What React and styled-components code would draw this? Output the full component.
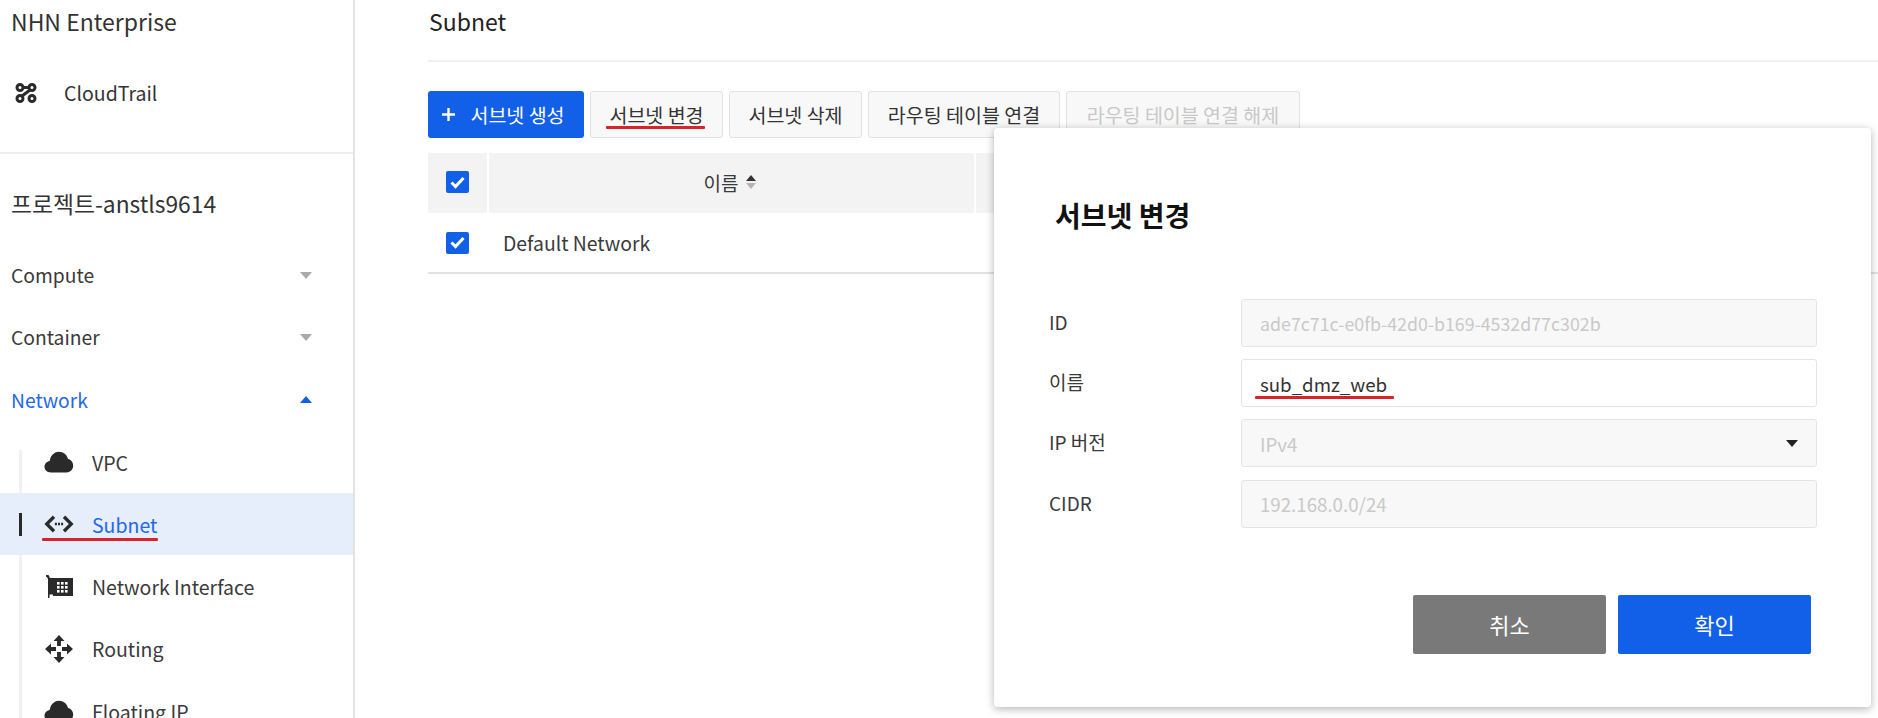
import React from "react";
import styled, { createGlobalStyle } from "styled-components";

const GlobalStyle = createGlobalStyle`
  html, body {
    margin: 0;
    padding: 0;
    background: #fff;
  }
  * { box-sizing: border-box; }
  body {
    font-family: "Noto Sans CJK KR", "Noto Sans", sans-serif;
    color: #333;
  }
`;

const Page = styled.div`
  position: relative;
  display: flex;
  width: 1878px;
  height: 718px;
  overflow: hidden;
`;

/* sidebar */
const Sidebar = styled.aside`
  width: 355px;
  height: 718px;
  flex-shrink: 0;
  border-right: 2px solid #e4e4e4;
  overflow: hidden;
`;

const Org = styled.div`
  height: 44px;
  padding-left: 11px;
  font-size: 23px;
  line-height: 43px;
  color: #333;
`;

const ServiceRow = styled.div`
  display: flex;
  align-items: center;
  gap: 27px;
  height: 110px;
  padding: 0 0 11px 15px;
  border-bottom: 2px solid #eeeeee;
  font-size: 19.5px;
`;

const Project = styled.div`
  height: 90px;
  padding-left: 11px;
  font-size: 22.8px;
  line-height: 99px;
`;

const Group = styled.div`
  position: relative;
  display: flex;
  align-items: center;
  justify-content: space-between;
  height: 62.3px;
  padding: 0 41px 0 11px;
  font-size: 19.3px;
  color: ${(p) => (p.$open ? "#2368e8" : "#3a3a3a")};
`;

const Caret = styled.span`
  width: 0;
  height: 0;
  border-left: ${(p) => p.$size || 6}px solid transparent;
  border-right: ${(p) => p.$size || 6}px solid transparent;
  ${(p) =>
    p.$up
      ? `border-bottom: ${(p.$size || 6) + 1}px solid ${p.$color};`
      : `border-top: ${(p.$size || 6) + 1}px solid ${p.$color};`}
`;

const SubList = styled.div`
  position: relative;
  &::before {
    content: "";
    position: absolute;
    left: 19px;
    top: 19px;
    bottom: 0;
    width: 3px;
    background: rgba(180, 190, 200, 0.22);
  }
`;

const SubRow = styled.div`
  position: relative;
  display: flex;
  align-items: center;
  gap: 18px;
  height: 62.3px;
  padding-left: 44px;
  font-size: 19.5px;
  color: ${(p) => (p.$active ? "#2368e8" : "#3a3a3a")};
  background: ${(p) => (p.$active ? "#e6eefb" : "transparent")};
`;

const ActiveBar = styled.span`
  position: absolute;
  left: 19px;
  top: 20px;
  width: 3px;
  height: 23px;
  background: #2a2a2a;
`;

const IconBox = styled.span`
  display: flex;
  align-items: center;
  justify-content: center;
  width: 30px;
  flex-shrink: 0;
`;

const Underline = styled.span`
  position: absolute;
  left: ${(p) => p.$left}px;
  top: ${(p) => p.$top}px;
  width: ${(p) => p.$width}px;
  height: 3px;
  border-radius: 1px;
  background: #d8232a;
`;

/* main */
const Main = styled.main`
  flex: 1;
  padding-left: 73px;
`;

const Title = styled.div`
  height: 62px;
  padding-left: 1px;
  border-bottom: 2px solid #f0f0f0;
  font-size: 23px;
  line-height: 43px;
  color: #222;
`;

const Toolbar = styled.div`
  display: flex;
  gap: 6px;
  margin-top: 29px;
`;

const ToolButton = styled.div`
  position: relative;
  display: flex;
  align-items: center;
  justify-content: center;
  gap: 15px;
  width: ${(p) => p.$width}px;
  height: 47px;
  border-radius: 3px;
  font-size: 19.5px;
  ${(p) =>
    p.$primary
      ? "padding-right: 5px; background: #1260e8; color: #fff;"
      : `background: #f8f8f8; border: 1px solid #e2e2e2; color: ${p.$disabled ? "#c8c8c8" : "#333"};`}
`;

const TableHead = styled.div`
  display: flex;
  gap: 2px;
  height: 60px;
  margin-top: 15px;
`;

const HeadCell = styled.div`
  display: flex;
  align-items: center;
  justify-content: center;
  gap: 8px;
  width: ${(p) => p.$width}px;
  padding: 0 ${(p) => p.$shift || 0}px 2px 0;
  background: #f3f3f3;
  font-size: 19px;
  color: #3a3a3a;
`;

const TableRow = styled.div`
  display: flex;
  align-items: center;
  height: 61px;
  border-bottom: 2px solid #e2e2e2;
`;

const CheckCell = styled.div`
  display: flex;
  justify-content: center;
  width: 59px;
`;

const Check = styled.span`
  display: flex;
  align-items: center;
  justify-content: center;
  width: 23px;
  height: 22px;
  border-radius: 2px;
  background: #1260e8;
`;

const RowName = styled.div`
  padding-left: 16px;
  font-size: 19.4px;
  color: #3a3a3a;
`;

const SortArrows = styled.span`
  display: flex;
  flex-direction: column;
  gap: 2px;
`;

/* modal */
const Modal = styled.section`
  position: absolute;
  left: 994px;
  top: 128px;
  width: 877px;
  height: 579px;
  padding: 0 54px 0 55px;
  border-radius: 4px;
  background: #fff;
  box-shadow: 0 2px 8px rgba(0, 0, 0, 0.3);
`;

const ModalTitle = styled.h2`
  margin: 0;
  height: 171px;
  padding: 0 0 0 6px;
  font-size: 28px;
  font-weight: 700;
  line-height: 174px;
  color: #111;
`;

const Form = styled.div`
  display: flex;
  flex-direction: column;
  gap: 12.2px;
`;

const FieldRow = styled.div`
  display: flex;
  align-items: center;
`;

const FieldLabel = styled.div`
  width: 192px;
  padding-bottom: 3px;
  font-size: 19px;
  color: #3a3a3a;
`;

const Field = styled.div`
  position: relative;
  display: flex;
  align-items: center;
  justify-content: space-between;
  width: 576px;
  height: 48px;
  padding: 0 18px;
  border: 1px solid #e4e4e4;
  border-radius: 3px;
  font-size: ${(p) => p.$fontSize || 18.7}px;
  background: ${(p) => (p.$disabled ? "#f8f8f8" : "#fff")};
  color: ${(p) => (p.$disabled ? "#c9c9c9" : "#333")};
`;

const Actions = styled.div`
  display: flex;
  justify-content: flex-end;
  gap: 12px;
  margin-top: 67px;
  padding-right: 6px;
`;

const ActionButton = styled.div`
  display: flex;
  align-items: center;
  justify-content: center;
  width: 193px;
  height: 59px;
  border-radius: 2px;
  font-size: 22px;
  color: #fff;
  background: ${(p) => (p.$primary ? "#1260e8" : "#797979")};
`;

/* drawings */
const TrailIcon = () => (
  <svg width="22" height="20" viewBox="0 0 22 20" fill="none" stroke="#2a2a2a" strokeWidth="3">
    <circle cx="5" cy="4.500" r="3" />
    <circle cx="17" cy="4.500" r="3" />
    <circle cx="5" cy="15.500" r="3" />
    <circle cx="17" cy="15.500" r="3" />
    <path d="M8 4.500h6M15 7 7 13" />
  </svg>
);

const CloudIcon = () => (
  <svg width="30" height="22" viewBox="0 0 30 22" fill="#2a2a2a">
    <path d="M7 21.500C3 21.500.5 19 .5 15.800c0-3 2.200-5.400 5.200-5.800C6.600 4.200 10.500.8 15 .8c4.400 0 8 3 9 7.200 3 .6 5.200 3.300 5.200 6.600 0 3.800-2.800 6.900-6.700 6.900H7z" />
  </svg>
);

const CodeIcon = () => (
  <svg width="33" height="22" viewBox="0 0 33 22" fill="none" stroke="#2a2a2a" strokeWidth="3.600">
    <path d="M11 3 3 11l8 8M22 3l8 8-8 8" />
    <path d="M12 11h9" strokeWidth="2.600" strokeDasharray="2.200 1.200" />
  </svg>
);

const CardIcon = () => (
  <svg width="27" height="23" viewBox="0 0 27 23" fill="#2a2a2a">
    <path d="M0 0h2.500l1.500 3h23v18H7v-1.500H3.500V23H2V3.500L0 1.500z" />
    <g fill="#fff">
      {[11, 15, 19].flatMap((x) =>
        [7, 11, 15].map((y) => <rect key={`${x}-${y}`} x={x} y={y} width="2.600" height="2.600" />)
      )}
    </g>
  </svg>
);

const RouteIcon = () => (
  <svg width="28" height="28" viewBox="0 0 28 28" fill="#2a2a2a">
    <path d="M14 0l5.500 6h-3.600v5h-3.800V6H8.500zM14 28l-5.500-6h3.600v-5h3.800v5h3.600zM0 14l6-5.500v3.600h5v3.800H6v3.600zM28 14l-6 5.500v-3.600h-5v-3.800h5V8.500z" />
  </svg>
);

const SmallCheck = () => (
  <svg width="15" height="13" viewBox="0 0 15 13" fill="none" stroke="#fff" strokeWidth="3">
    <path d="M1.500 6.500 5.500 10.500 13.500 2" />
  </svg>
);

const PlusIcon = () => (
  <svg width="13" height="13" viewBox="0 0 13 13" fill="none" stroke="#fff" strokeWidth="2.400">
    <path d="M6.500 0v13M0 6.500h13" />
  </svg>
);

const SUB_ITEMS = [
  { name: "VPC", icon: <CloudIcon /> },
  { name: "Subnet", icon: <CodeIcon />, active: true },
  { name: "Network Interface", icon: <CardIcon /> },
  { name: "Routing", icon: <RouteIcon /> },
  { name: "Floating IP", icon: <CloudIcon /> },
];

export default function App() {
  return (
    <Page>
      <GlobalStyle />
      <Sidebar>
        <Org>NHN Enterprise</Org>
        <ServiceRow>
          <TrailIcon />
          <span>CloudTrail</span>
        </ServiceRow>
        <Project>프로젝트-anstls9614</Project>
        <Group>
          Compute
          <Caret $color="#aaa" />
        </Group>
        <Group>
          Container
          <Caret $color="#aaa" />
        </Group>
        <Group $open>
          Network
          <Caret $up $color="#1260e8" />
        </Group>
        <SubList>
          {SUB_ITEMS.map((item) => (
            <SubRow key={item.name} $active={item.active}>
              {item.active && <ActiveBar />}
              <IconBox>{item.icon}</IconBox>
              <span>{item.name}</span>
              {item.active && <Underline $left={42} $top={45} $width={116} />}
            </SubRow>
          ))}
        </SubList>
      </Sidebar>

      <Main>
        <Title>Subnet</Title>
        <Toolbar>
          <ToolButton $primary $width={156}>
            <PlusIcon />
            서브넷 생성
          </ToolButton>
          <ToolButton $width={133}>
            서브넷 변경
            <Underline $left={15} $top={34} $width={99} />
          </ToolButton>
          <ToolButton $width={133}>서브넷 삭제</ToolButton>
          <ToolButton $width={192}>라우팅 테이블 연결</ToolButton>
          <ToolButton $disabled $width={234}>라우팅 테이블 연결 해제</ToolButton>
        </Toolbar>
        <TableHead>
          <HeadCell $width={59}>
            <Check><SmallCheck /></Check>
          </HeadCell>
          <HeadCell $width={485} $shift={3}>
            이름
            <SortArrows>
              <Caret $up $size={5} $color="#333" />
              <Caret $size={5} $color="#b5b5b5" />
            </SortArrows>
          </HeadCell>
          <HeadCell $width={400} />
        </TableHead>
        <TableRow>
          <CheckCell>
            <Check><SmallCheck /></Check>
          </CheckCell>
          <RowName>Default Network</RowName>
        </TableRow>
      </Main>

      <Modal>
        <ModalTitle>서브넷 변경</ModalTitle>
        <Form>
          <FieldRow>
            <FieldLabel>ID</FieldLabel>
            <Field $disabled $fontSize={17.8}>ade7c71c-e0fb-42d0-b169-4532d77c302b</Field>
          </FieldRow>
          <FieldRow>
            <FieldLabel>이름</FieldLabel>
            <Field>
              sub_dmz_web
              <Underline $left={13} $top={36} $width={139} />
            </Field>
          </FieldRow>
          <FieldRow>
            <FieldLabel>IP 버전</FieldLabel>
            <Field $disabled>
              IPv4
              <Caret $color="#222" />
            </Field>
          </FieldRow>
          <FieldRow>
            <FieldLabel>CIDR</FieldLabel>
            <Field $disabled>192.168.0.0/24</Field>
          </FieldRow>
        </Form>
        <Actions>
          <ActionButton>취소</ActionButton>
          <ActionButton $primary>확인</ActionButton>
        </Actions>
      </Modal>
    </Page>
  );
}
